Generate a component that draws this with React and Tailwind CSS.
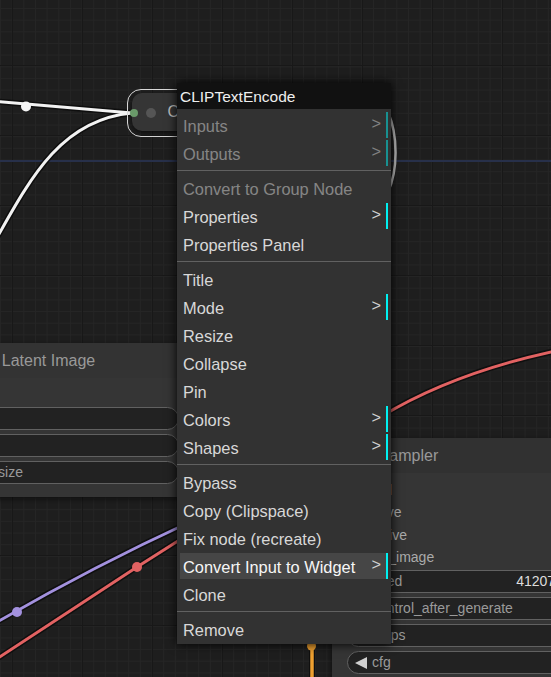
import clsx from "clsx";

const menuItems = [
  { label: "Inputs", sub: true, disabled: true },
  { label: "Outputs", sub: true, disabled: true },
  "sep",
  { label: "Convert to Group Node", disabled: true },
  { label: "Properties", sub: true },
  { label: "Properties Panel" },
  "sep",
  { label: "Title" },
  { label: "Mode", sub: true },
  { label: "Resize" },
  { label: "Collapse" },
  { label: "Pin" },
  { label: "Colors", sub: true },
  { label: "Shapes", sub: true },
  "sep",
  { label: "Bypass" },
  { label: "Copy (Clipspace)" },
  { label: "Fix node (recreate)" },
  { label: "Convert Input to Widget", sub: true, active: true },
  { label: "Clone" },
  "sep",
  { label: "Remove" },
];

function MenuEntry({ item }) {
  return (
    <div
      className={clsx(
        "relative mx-[3px] flex h-[26px] shrink-0 items-center whitespace-nowrap pl-[3px] pt-[2px]",
        item.sub && "border-r-2 border-[#00f0f0]",
        item.disabled && "opacity-50",
        item.active ? "bg-[#464646] text-[#f6f6f6]" : "text-[#d8d8d8]"
      )}
    >
      {item.label}
      {item.sub && (
        <span className="absolute right-[5px] top-[-1px] bottom-[2px] flex items-center text-[#d0d0d0]">
          &gt;
        </span>
      )}
    </div>
  );
}

function ContextMenu() {
  return (
    <div className="absolute left-[177px] top-[83px] w-[214px] bg-[#323232] text-[16.4px] shadow-[0_0_10px_black]">
      <div className="flex h-[26px] items-center bg-[#111111] pl-[3px] pt-[1px] text-[15.5px] text-[#eeeeee]">
        CLIPTextEncode
      </div>
      <div className="flex flex-col gap-[2px] pb-[2px] pt-[3px]">
        {menuItems.map((item, i) =>
          item === "sep" ? (
            <div key={i} className="flex h-[5px] shrink-0 items-center">
              <div className="h-px w-full bg-[#616161]" />
            </div>
          ) : (
            <MenuEntry key={i} item={item} />
          )
        )}
      </div>
    </div>
  );
}

function Widget({ label, value, arrows, labelPad = "pl-[17px]" }) {
  return (
    <div className="flex h-[23px] shrink-0 items-center rounded-full border border-[#616161] bg-[#222222] pl-[7px] pr-[8px] text-[14px]">
      {arrows && (
        <svg width="12" height="12" viewBox="0 0 12 12" className="mr-[5px] shrink-0">
          <polygon points="12,0 12,12 0,6" fill="#d0d0d0" />
        </svg>
      )}
      <span className={clsx("text-[#9a9a9a]", !arrows && labelPad)}>{label}</span>
      {value && <span className="ml-auto mr-[17px] text-[#dddddd]">{value}</span>}
    </div>
  );
}

function LatentNode() {
  return (
    <div className="absolute left-[-76px] top-[343px] w-[270px] bg-[#353535] shadow-[0_2px_6px_rgba(0,0,0,0.6)]">
      <div className="flex h-[35px] items-center bg-[#333333] pl-[28px] text-[16px] text-[#999999]">
        Empty Latent Image
      </div>
      <div className="flex flex-col gap-[4px] px-[15px] pb-[13px] pt-[29px]">
        <Widget label="width" labelPad="pl-[8px]" />
        <Widget label="height" labelPad="pl-[8px]" />
        <Widget label="batch_size" labelPad="pl-[9px]" />
      </div>
    </div>
  );
}

function KSamplerNode() {
  return (
    <div className="absolute left-[332px] top-[438px] w-[342px] bg-[#353535] pb-[20px] shadow-[0_2px_6px_rgba(0,0,0,0.6)]">
      <div className="flex h-[35px] items-center bg-[#313131] pl-[36px] text-[16px] text-[#999999]">
        KSampler
      </div>
      <div className="flex flex-col pl-[22px] pt-[6px] text-[14px] text-[#aaaaaa]">
        {["model", "positive", "negative", "latent_image"].map((s) => (
          <div key={s} className="flex h-[22.5px] items-center">
            {s}
          </div>
        ))}
      </div>
      <div className="mt-px flex flex-col gap-[4px] px-[15px]">
        <Widget label="seed" value="412073918456291" arrows />
        <Widget label="control_after_generate" value="randomize" arrows />
        <Widget label="steps" value="20" arrows />
        <Widget label="cfg" value="8.0" arrows />
      </div>
    </div>
  );
}

function CollapsedNode() {
  return (
    <div className="absolute left-[127px] top-[89px] h-[48px] w-[170px] rounded-[14px] border-[1.5px] border-[#d8d8d8]">
      <div className="ml-[3.5px] mt-[2.5px] flex h-[38px] items-center rounded-[10px] bg-[#353535] pl-[36px] text-[16px] text-[#bbbbbb] shadow-[0_2px_4px_rgba(0,0,0,0.5)]">
        CLIPTextEncode
      </div>
      <div className="absolute left-[1.5px] top-[18.5px] h-[8px] w-[8px] rounded-full bg-[#6a9a6a]" />
      <div className="absolute left-[17.5px] top-[17.5px] h-[10px] w-[10px] rounded-full bg-[#555555]" />
    </div>
  );
}

function Wires() {
  return (
    <svg className="absolute inset-0" width="551" height="677" viewBox="0 0 551 677" fill="none">
      <g stroke="#0b0b0b" strokeWidth="6" strokeLinecap="round" opacity="0.8">
        <path d="M-8,101 Q60,107 132,113" />
        <path d="M-10,250 C28,183 58,120 132,113" />
        <path d="M-8,625 Q90,568 190,522" />
        <path d="M-8,662 L137,567 L200,527" />
        <path d="M382,416 Q455,372 560,350" />
        <path d="M312,630 L312,690" />
      </g>
      <g strokeWidth="3" strokeLinecap="round">
        <path d="M-8,101 Q60,107 132,113" stroke="#f2f2f2" />
        <path d="M-10,250 C28,183 58,120 132,113" stroke="#f2f2f2" />
        <path d="M-8,625 Q90,568 190,522" stroke="#a391de" />
        <path d="M-8,662 L137,567 L200,527" stroke="#e26262" />
        <path d="M382,416 Q455,372 560,350" stroke="#e26262" />
        <path d="M312,630 L312,690" stroke="#eea030" strokeWidth="3.5" />
      </g>
      <path d="M388,112 C398,135 398,170 388,192" stroke="#bdbdbd" strokeWidth="2.5" />
      <circle cx="26" cy="106.5" r="5" fill="#f5f5f5" />
      <circle cx="17" cy="612" r="5" fill="#a391de" />
      <circle cx="137" cy="567" r="5" fill="#e26262" />
      <circle cx="311.5" cy="646" r="4.5" fill="#eea030" />
    </svg>
  );
}

export default function App() {
  return (
    <div className="relative h-[677px] w-[551px] overflow-hidden bg-[#1e1e1e] bg-[linear-gradient(90deg,#181818_1px,transparent_1px),linear-gradient(#181818_1px,transparent_1px),linear-gradient(90deg,#252525_1px,transparent_1px),linear-gradient(#252525_1px,transparent_1px)] bg-[size:70px_70px,70px_70px,11.67px_11.67px,11.67px_11.67px] bg-[position:12px_65px,12px_65px,0_8px,0_8px] font-['Liberation_Sans',Arial,sans-serif]">
      <div className="absolute left-0 top-[160px] h-[2px] w-full bg-[#27304a]" />
      <Wires />
      <LatentNode />
      <KSamplerNode />
      <CollapsedNode />
      <ContextMenu />
    </div>
  );
}
